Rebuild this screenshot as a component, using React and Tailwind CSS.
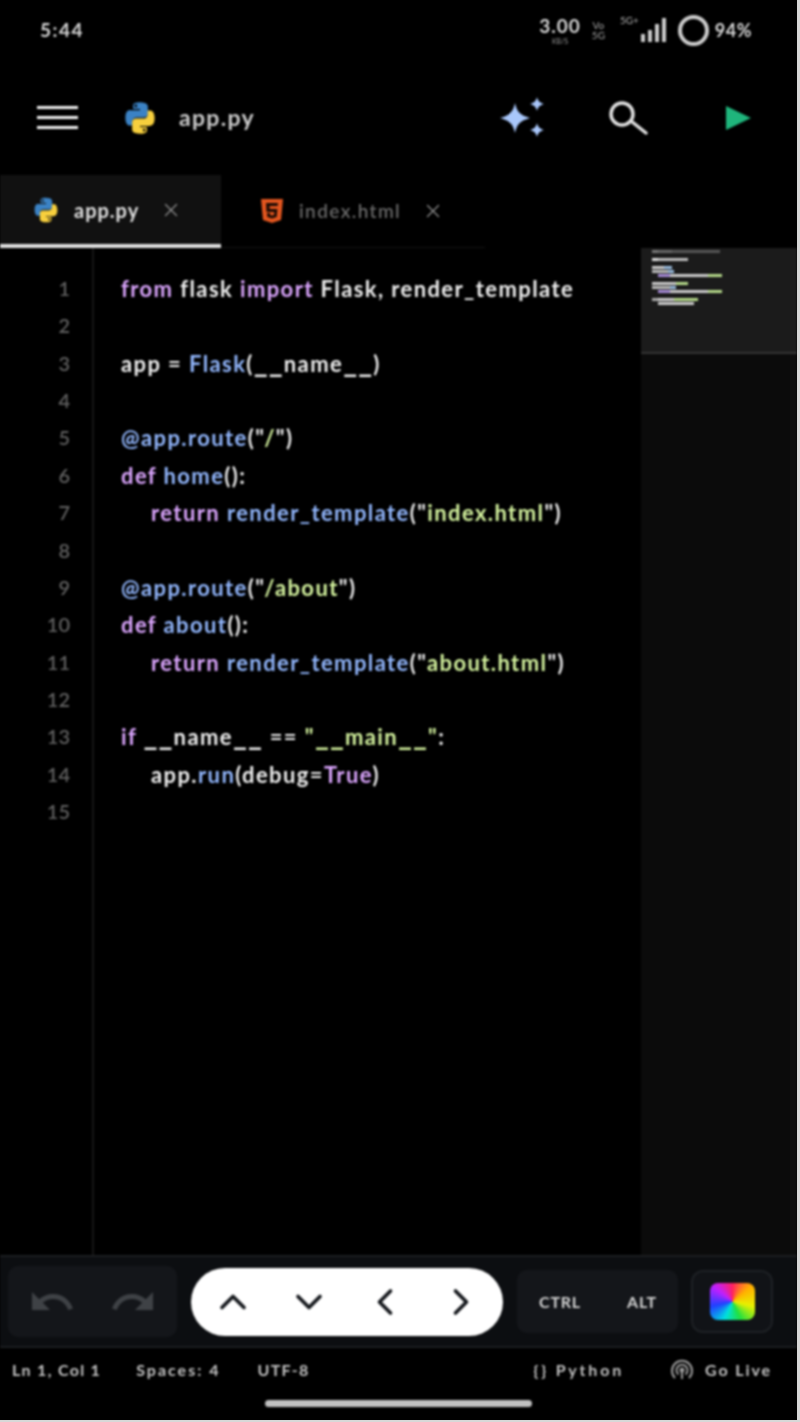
import React from 'react';
import { ChevronUp, ChevronDown, ChevronLeft, ChevronRight, X } from 'lucide-react';

const P = 'text-[#dca6ff]';
const B = 'text-[#93b8ff]';
const G = 'text-[#d6f5a0]';
const W = 'text-[#f0f0f0]';
const U = 'text-[30px] leading-none tracking-[1px]'; // underscores are wide in the reference font

// each line: list of [text, colour, extra]
const CODE = [
  [['from', P], [' flask ', W], ['import', P], [' Flask, render_template', W]],
  [],
  [['app = ', W], ['Flask', B], ['(', W], ['__', W, U], ['name', W], ['__', W, U], [')', W]],
  [],
  [['@app.route', B], ['("', W], ['/', G], ['")', W]],
  [['def', P], [' home', B], ['():', W]],
  [['return', P], [' render_template', B], ['("', W], ['index.html', G], ['")', W]],
  [],
  [['@app.route', B], ['("', W], ['/about', G], ['")', W]],
  [['def', P], [' about', B], ['():', W]],
  [['return', P], [' render_template', B], ['("', W], ['about.html', G], ['")', W]],
  [],
  [['if', P], [' ', W], ['__', W, U], ['name', W], ['__', W, U], [' == ', W], ['"', G], ['__', G, U], ['main', G], ['__', G, U], ['"', G], [':', W]],
  [['app.', W], ['run', B], ['(debug=', W], ['True', P], [')', W]],
  [],
];
const INDENTED = [6, 10, 13];

// minimap rows: [left offset, [width, colour]...]
const MINI = [
  [0, [[6, '#777'], [14, '#666'], [48, '#555']]],
  [0],
  [0, [[6, '#ddd'], [30, '#bbb']]],
  [0],
  [0, [[12, '#ccc'], [8, '#9bd']]],
  [0, [[16, '#bbb'], [6, '#9bd']]],
  [6, [[12, '#a78bd8'], [38, '#ccc'], [14, '#b5d98a']]],
  [0],
  [0, [[24, '#ccc'], [12, '#b5d98a']]],
  [0, [[18, '#bbb'], [6, '#9bd']]],
  [6, [[12, '#a78bd8'], [38, '#ccc'], [14, '#b5d98a']]],
  [0],
  [0, [[6, '#aaa'], [16, '#ccc'], [24, '#b5d98a']]],
  [6, [[36, '#ccc']]],
];

function PythonLogo({ size }) {
  return (
    <svg width={size} height={size} viewBox="0 0 32 32" className="shrink-0">
      <path fill="#3b82c4" d="M15.8 2C9.5 2 9.9 4.7 9.9 4.7V8h6.1v1H7.4S3 8.5 3 15.7s3.800 7 3.800 7H9.200v-3.300s-.1-3.900 3.800-3.900h6.300s3.700.1 3.700-3.500V5.800S23.500 2 15.800 2zm-3.500 2.100a1.200 1.200 0 1 1 0 2.400 1.200 1.200 0 0 1 0-2.400z" />
      <path fill="#f7cf3d" d="M16.200 30c6.300 0 5.900-2.700 5.900-2.700V24H16v-1h8.600s4.400.5 4.400-6.700-3.800-7-3.800-7h-2.400v3.300s.1 3.900-3.800 3.900h-6.300s-3.700-.1-3.700 3.500v6.200S8.500 30 16.200 30zm3.500-2.100a1.200 1.200 0 1 1 0-2.400 1.200 1.200 0 0 1 0 2.400z" />
    </svg>
  );
}

function HtmlLogo() {
  return (
    <svg width="24" height="26" viewBox="0 0 24 26" className="shrink-0">
      <path fill="#e4561f" d="M1 1h22l-2 21-9 3-9-3z" />
      <path fill="#1a0a04" d="M6 5h12l-.3 3H9.500l.2 3h7.700l-.7 8-4.700 1.500L7.300 19l-.3-4h3l.1 2 2 .6 2-.6.2-3H6.500z" />
    </svg>
  );
}

function Sparkles() {
  return (
    <svg width="50" height="42" viewBox="0 0 50 42" fill="#a9c7fb">
      <path d="M16 6c2 9 5 12 15 15-10 3-13 6-15 15-2-9-5-12-15-15 10-3 13-6 15-15z" />
      <path d="M38 0c1 4 2.500 5.500 7 7-4.500 1.500-6 3-7 7-1-4-2.500-5.500-7-7 4.500-1.500 6-3 7-7z" />
      <path d="M38 26c1 4 2.500 5.500 7 7-4.500 1.500-6 3-7 7-1-4-2.500-5.500-7-7 4.500-1.500 6-3 7-7z" />
    </svg>
  );
}

function Signal() {
  return (
    <div className="flex items-end gap-[3px] h-[24px]">
      <span className="w-[4px] h-[8px] bg-[#ccc]" />
      <span className="w-[4px] h-[12px] bg-[#ccc]" />
      <span className="w-[4px] h-[18px] bg-[#ccc]" />
      <span className="w-[4px] h-[24px] bg-[#ccc]" />
    </div>
  );
}

const UNDO = 'M12.500 8c-2.650 0-5.050.99-6.900 2.600L2 7v9h9l-3.620-3.620c1.390-1.160 3.160-1.880 5.120-1.880 3.540 0 6.550 2.310 7.600 5.500l2.370-.78C21.080 11.030 17.150 8 12.500 8z';

function App() {
  return (
    <div className="w-[800px] h-[1422px] overflow-hidden bg-black border-r-[3px] border-b-2 border-[#d8d8d8] font-['Lato',sans-serif]">
      <div className="w-[797px] h-[1420px] flex flex-col bg-black blur-[1px]">

        {/* status bar */}
        <div className="h-[60px] shrink-0 flex items-center justify-between pl-[40px] pr-[45px] text-[#d8d8d8]">
          <span className="text-[19px] font-bold tracking-[1.5px]">5:44</span>
          <div className="flex items-center">
            <div className="flex flex-col items-center">
              <span className="text-[19px] font-bold tracking-[1px] leading-[23px]">3.00</span>
              <span className="text-[7px] leading-[9px] text-[#999]">KB/S</span>
            </div>
            <div className="flex flex-col items-center leading-none text-[10px] ml-[11px] text-[#aaa]">
              <span>Vo</span>
              <span>5G</span>
            </div>
            <span className="text-[10px] leading-none self-start mt-[1px] ml-[15px] mr-[2px] text-[#bbb]">5G+</span>
            <Signal />
            <span className="w-[31px] h-[31px] ml-[12px] rounded-full border-[4px] border-[#ccc]" />
            <span className="text-[18px] font-bold ml-[6px] tracking-[0.5px]">94%</span>
          </div>
        </div>

        {/* header */}
        <div className="h-[115px] shrink-0 flex items-center pl-[37px] pr-[46px]">
          <div className="flex flex-col gap-[7px] w-[41px]">
            <span className="h-[3px] bg-[#f0f0f0]" />
            <span className="h-[3px] bg-[#f0f0f0]" />
            <span className="h-[3px] bg-[#f0f0f0]" />
          </div>
          <div className="ml-[44px]"><PythonLogo size={36} /></div>
          <span className="ml-[21px] text-[23px] font-bold tracking-[1.3px] text-[#cccccc]">app.py</span>
          <div className="ml-auto"><Sparkles /></div>
          <svg width="40" height="34" viewBox="0 0 40 34" fill="none" stroke="#e0e0e0" strokeWidth="3.5" strokeLinecap="round" className="ml-[59px]">
            <circle cx="14" cy="13" r="11" />
            <path d="M23 20l15 12" />
          </svg>
          <svg width="25" height="24" viewBox="0 0 25 24" className="ml-[78px]">
            <polygon points="0,0 25,12 0,24" fill="#1fb57c" />
          </svg>
        </div>

        {/* tabs */}
        <div className="h-[73px] shrink-0 flex">
          <div className="w-[221px] flex items-center pl-[32px] bg-[#111111] border-b-[4px] border-[#e0e0e0]">
            <PythonLogo size={28} />
            <span className="ml-[14px] text-[20px] font-bold tracking-[1px] text-[#e0e0e0]">app.py</span>
            <X size={22} strokeWidth={1.5} className="ml-[21px] text-[#8a8a8a]" />
          </div>
          <div className="w-[264px] flex items-center pl-[39px] border-b border-[#141414]">
            <HtmlLogo />
            <span className="ml-[15px] text-[19px] font-semibold tracking-[1.4px] text-[#6a6a6a]">index.html</span>
            <X size={22} strokeWidth={1.5} className="ml-[21px] text-[#8a8a8a]" />
          </div>
        </div>

        {/* editor */}
        <div className="h-[1007px] shrink-0 flex min-h-0">
          <div className="w-[94px] shrink-0 border-r-2 border-[#161616] pt-[22px]">
            {CODE.map((_, i) => (
              <div key={i} className="h-[37.36px] leading-[37.36px] pr-[22px] text-right text-[20px] font-semibold text-[#606060]">{i + 1}</div>
            ))}
          </div>
          <div className="flex-1 pt-[22px] pl-[27px] text-[22px] font-bold tracking-[1.4px]">
            {CODE.map((line, i) => (
              <div key={i} className={`h-[37.36px] leading-[37.36px] whitespace-pre ${INDENTED.includes(i) ? 'pl-[30px]' : ''}`}>
                {line.map(([t, c, x], j) => <span key={j} className={x ? `${c} ${x}` : c}>{t}</span>)}
              </div>
            ))}
          </div>
          <div className="w-[156px] shrink-0 flex flex-col bg-[#0b0b0b]">
            <div className="h-[106px] bg-[#1b1b1b] border-b-2 border-[#333] pl-[11px] pt-[2px]">
              {MINI.map(([left, segs], i) => (
                <div key={i} className="h-[4px] flex" style={{ marginLeft: left }}>
                  {(segs || []).map(([w, c], j) => (
                    <span key={j} className="h-[3px]" style={{ width: w, backgroundColor: c }} />
                  ))}
                </div>
              ))}
            </div>
          </div>
        </div>

        {/* key toolbar */}
        <div className="h-[93px] shrink-0 flex items-center pl-[8px] bg-[#0c0e11] border-t-2 border-b-2 border-[#1c1e21]">
          <div className="w-[169px] h-[71px] rounded-[10px] bg-[#14161a] flex items-center justify-around px-[4px]">
            <svg width="48" height="48" viewBox="0 0 24 24" fill="#3f4246"><path d={UNDO} /></svg>
            <svg width="48" height="48" viewBox="0 0 24 24" fill="#3f4246" className="-scale-x-100"><path d={UNDO} /></svg>
          </div>
          <div className="ml-[14px] w-[312px] h-[68px] rounded-full bg-white flex items-center pl-[4px] text-[#15181c]">
            <div className="w-[76px] flex justify-center"><ChevronUp size={44} strokeWidth={2} /></div>
            <div className="w-[76px] flex justify-center"><ChevronDown size={44} strokeWidth={2} /></div>
            <div className="w-[76px] flex justify-center"><ChevronLeft size={44} strokeWidth={2} /></div>
            <div className="w-[76px] flex justify-center"><ChevronRight size={44} strokeWidth={2} /></div>
          </div>
          <div className="ml-[14px] w-[161px] h-[63px] rounded-[10px] bg-[#14161a] flex items-center justify-between pl-[22px] pr-[21px] text-[16px] font-bold tracking-[0.8px] text-[#d4d4d4]">
            <span>CTRL</span>
            <span>ALT</span>
          </div>
          <div className="ml-[13px] w-[82px] h-[63px] rounded-[12px] bg-[#111317] border-2 border-[#1e2125] flex items-center justify-center">
            <span className="w-[45px] h-[37px] rounded-[8px] bg-[conic-gradient(#ff2060,#ffb000,#e8f000,#20e040,#00e0e0,#2040ff,#c020ff,#ff2060)]" />
          </div>
        </div>

        {/* status line */}
        <div className="h-[44px] shrink-0 flex items-center pl-[12px] pr-[25px] text-[16px] font-bold tracking-[1.3px] text-[#c4c4c4]">
          <span>Ln 1, Col 1</span>
          <span className="ml-[35px] tracking-[2px]">Spaces: 4</span>
          <span className="ml-[37px]">UTF-8</span>
          <span className="ml-auto tracking-[2.8px]">{'{}'} Python</span>
          <svg width="24" height="24" viewBox="0 0 24 24" fill="none" stroke="#9a9a9a" strokeWidth="2" className="ml-[46px]">
            <path d="M5 20a10 10 0 1 1 14 0" />
            <path d="M8.500 16.500a5.500 5.500 0 1 1 7 0" />
            <circle cx="12" cy="12" r="1.500" fill="#9a9a9a" />
            <path d="M12 14v7" />
          </svg>
          <span className="ml-[11px] tracking-[1.9px]">Go Live</span>
        </div>

        {/* home indicator */}
        <div className="flex-1 flex justify-center items-start">
          <span className="mt-[8px] w-[267px] h-[7px] rounded-full bg-[#c0c0c0]" />
        </div>
      </div>
    </div>
  );
}

export default App;
